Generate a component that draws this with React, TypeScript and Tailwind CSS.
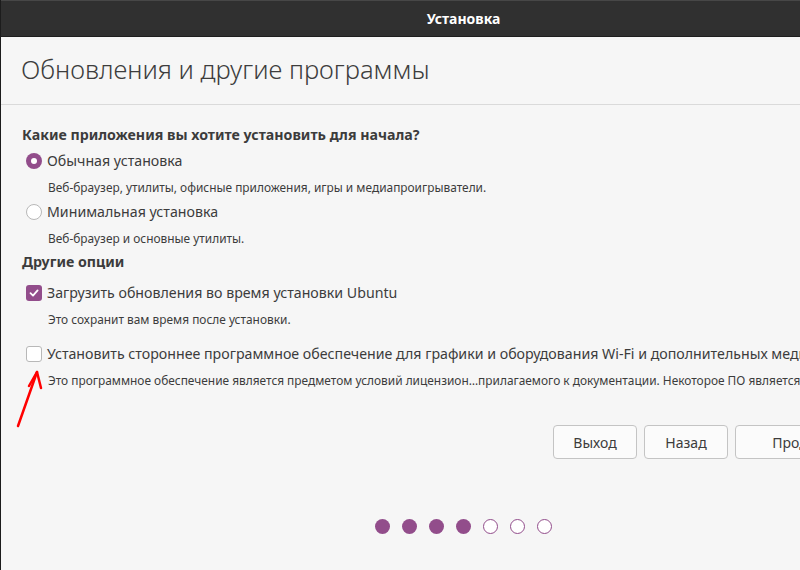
import React from "react";

const font = { fontFamily: '"Noto Sans", "DejaVu Sans", sans-serif' };

function Radio({ checked }: { checked?: boolean }) {
  return checked ? (
    <span className="flex h-[16px] w-[16px] shrink-0 items-center justify-center rounded-full bg-[#924d8b]">
      <span className="h-[6px] w-[6px] rounded-full bg-white" />
    </span>
  ) : (
    <span className="h-[16px] w-[16px] shrink-0 rounded-full border border-[#b8b8b8] bg-white" />
  );
}

function Check({ checked }: { checked?: boolean }) {
  return checked ? (
    <span className="flex h-[16px] w-[16px] shrink-0 items-center justify-center rounded-[3px] bg-[#924d8b]">
      <svg width="12" height="12" viewBox="0 0 12 12" fill="none">
        <path d="M2.5 6.2 5 8.6 9.6 3.4" stroke="white" strokeWidth="1.8" strokeLinecap="round" strokeLinejoin="round" />
      </svg>
    </span>
  ) : (
    <span className="h-[16px] w-[16px] shrink-0 rounded-[3px] border border-[#b8b8b8] bg-white" />
  );
}

function Option({
  control,
  label,
  hint,
}: {
  control: React.ReactNode;
  label: string;
  hint: string;
}) {
  return (
    <div className="flex flex-col">
      <div className="flex items-center gap-[5px] pl-[25px] h-[24px]">
        {control}
        <span className="whitespace-nowrap text-[14.2px] text-[#3c3c3c]">{label}</span>
      </div>
      <div className="mt-[3px] pl-[47px] h-[24px] flex items-center whitespace-nowrap text-[11.9px] text-[#3c3c3c]">
        {hint}
      </div>
    </div>
  );
}

function Btn({ children, w }: { children: React.ReactNode; w: string }) {
  return (
    <button
      className={`${w} h-[34px] shrink-0 rounded-[4px] border border-[#c4c4c4] bg-[#fbfbfb] text-[14px] text-[#3c3c3c]`}
    >
      {children}
    </button>
  );
}

export default function App() {
  const dots = [true, true, true, true, false, false, false];
  return (
    <div className="relative h-[570px] w-[800px] overflow-hidden bg-[#f6f6f6]" style={font}>
      <div className="flex h-full w-[926px] flex-col border-l border-[#1c1c1c]">
        <div className="flex h-[37px] shrink-0 items-center justify-center border-t border-[#474747] border-b border-b-[#1e1e1e] bg-[#303030]">
          <span className="text-[14px] font-bold text-white">Установка</span>
        </div>
        <div className="flex h-[68px] shrink-0 items-center border-b border-[#dadada] pl-[20px]">
          <h1 className="text-[25.6px] font-light text-[#3d3d3d]">Обновления и другие программы</h1>
        </div>
        <div className="flex flex-col pt-[18px]">
          <div className="h-[24px] flex items-center pl-[21px] text-[14.2px] font-bold text-[#3c3c3c]">
            Какие приложения вы хотите установить для начала?
          </div>
          <div className="mt-[2px]">
            <Option
              control={<Radio checked />}
              label="Обычная установка"
              hint="Веб-браузер, утилиты, офисные приложения, игры и медиапроигрыватели."
            />
          </div>
          <Option
            control={<Radio />}
            label="Минимальная установка"
            hint="Веб-браузер и основные утилиты."
          />
          <div className="h-[22px] flex items-center pl-[21px] text-[14.2px] font-bold text-[#3c3c3c]">
            Другие опции
          </div>
          <div className="mt-[8px]">
            <Option
              control={<Check checked />}
              label="Загрузить обновления во время установки Ubuntu"
              hint="Это сохранит вам время после установки."
            />
          </div>
          <div className="mt-[10px]">
            <Option
              control={<Check />}
              label="Установить стороннее программное обеспечение для графики и оборудования Wi-Fi и дополнительных медиаформатов"
              hint="Это программное обеспечение является предметом условий лицензион…прилагаемого к документации. Некоторое ПО является проприетарным."
            />
          </div>
        </div>
        <div className="mt-[32px] flex gap-[7px] pl-[552px]">
          <Btn w="w-[84px]">Выход</Btn>
          <Btn w="w-[84px]">Назад</Btn>
          <Btn w="w-[160px]">Продолжить</Btn>
        </div>
        <div className="mt-[60px] flex gap-[12px] pl-[374px]">
          {dots.map((on, i) => (
            <span
              key={i}
              className={
                on
                  ? "h-[15px] w-[15px] rounded-full bg-[#924d8b]"
                  : "h-[15px] w-[15px] rounded-full border-[1.5px] border-[#924d8b] bg-white"
              }
            />
          ))}
        </div>
      </div>
      <svg className="absolute left-[10px] top-[364px]" width="40" height="66" viewBox="0 0 40 66" fill="none">
        <path d="M8 62 L27 8" stroke="#ff0000" strokeWidth="2.5" strokeLinecap="round" />
        <path d="M19 22 L27 8 L31 24" stroke="#ff0000" strokeWidth="2.5" strokeLinecap="round" strokeLinejoin="round" />
      </svg>
    </div>
  );
}
